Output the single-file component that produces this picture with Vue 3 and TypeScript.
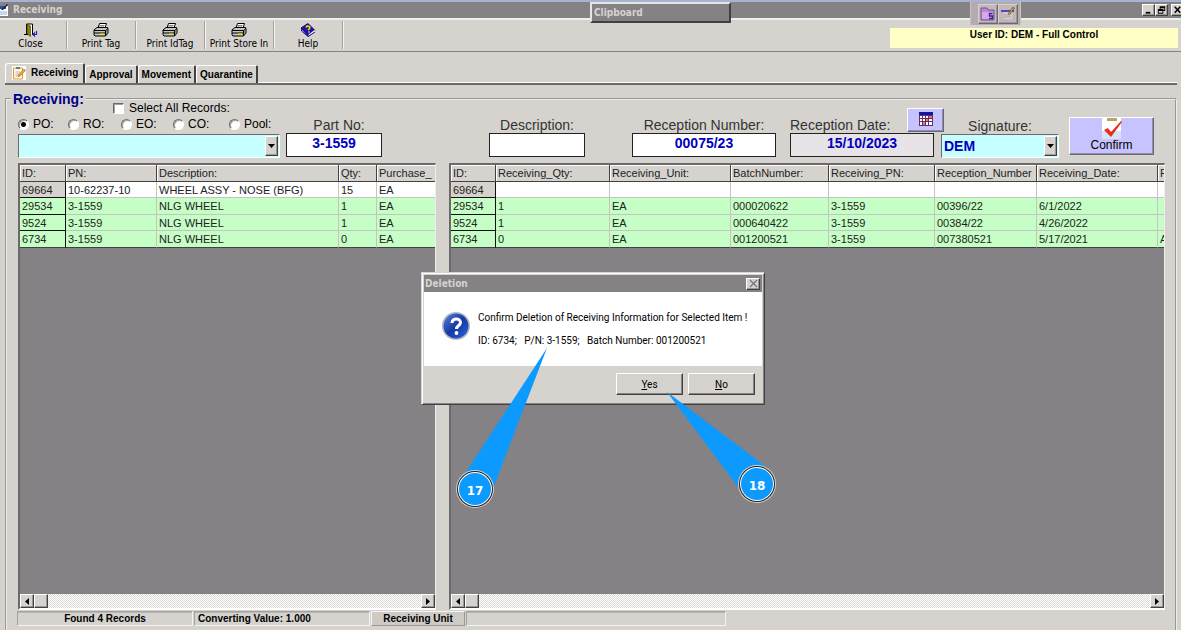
<script setup lang="ts">
import { ref } from 'vue'

type Row = string[]

const tools = [
  { label: 'Close', icon: 'door' },
  { label: 'Print Tag', icon: 'printer' },
  { label: 'Print IdTag', icon: 'printer' },
  { label: 'Print Store In', icon: 'printer' },
  { label: 'Help', icon: 'book' },
]
const tabs = ['Receiving', 'Approval', 'Movement', 'Quarantine']
const sources = ['PO:', 'RO:', 'EO:', 'CO:', 'Pool:']

const source = ref('PO:')
const selectAll = ref(false)
const order = ref('')
const partNo = ref('3-1559')
const description = ref('')
const receptionNumber = ref('00075/23')
const receptionDate = ref('15/10/2023')
const signature = ref('DEM')

const orderColumns = ['ID:', 'PN:', 'Description:', 'Qty:', 'Purchase_']
const orderRows: Row[] = [
  ['69664', '10-62237-10', 'WHEEL ASSY - NOSE (BFG)', '15', 'EA'],
  ['29534', '3-1559', 'NLG WHEEL', '1', 'EA'],
  ['9524', '3-1559', 'NLG WHEEL', '1', 'EA'],
  ['6734', '3-1559', 'NLG WHEEL', '0', 'EA'],
]

const receiptColumns = [
  'ID:', 'Receiving_Qty:', 'Receiving_Unit:', 'BatchNumber:', 'Receiving_PN:',
  'Reception_Number', 'Receiving_Date:', 'R',
]
const receiptRows: Row[] = [
  ['69664', '', '', '', '', '', '', ''],
  ['29534', '1', 'EA', '000020622', '3-1559', '00396/22', '6/1/2022', ''],
  ['9524', '1', 'EA', '000640422', '3-1559', '00384/22', '4/26/2022', ''],
  ['6734', '0', 'EA', '001200521', '3-1559', '007380521', '5/17/2021', 'A'],
]

const grids = [
  { name: 'orders', columns: orderColumns, rows: orderRows },
  { name: 'receipts', columns: receiptColumns, rows: receiptRows },
]
</script>

<template>
  <div class="window">
    <header class="titlebar">
      <svg class="app-icon" viewBox="0 0 8 12" aria-hidden="true">
        <path d="M0 2h8v10H0z" fill="#fff" />
        <path d="M0 2h6v3H0z" fill="#2a4fb0" />
        <path d="M1 6L7 0l1 1-5 5z" fill="#222" />
        <path d="M0 8h7M0 10h7" stroke="#8fb0d8" />
      </svg>
      <h1>Receiving</h1>
      <div class="window-buttons">
        <button type="button" class="bevel" aria-label="Minimize">
          <svg viewBox="0 0 12 10"><path d="M3 7h5v2H3z" /></svg>
        </button>
        <button type="button" class="bevel" aria-label="Restore">
          <svg viewBox="0 0 12 10"><path d="M4 1h6v5H8V5h1V3H5v1H4zM2 4h6v5H2zM3 6v2h4V6z" fill-rule="evenodd" /></svg>
        </button>
        <button type="button" class="bevel" aria-label="Close window">
          <svg viewBox="0 0 12 10"><path d="M3 1.500L9 8M9 1.500L3 8" stroke="#000" stroke-width="1.700" /></svg>
        </button>
      </div>
    </header>

    <nav class="toolbar" aria-label="Tools">
      <button v-for="tool in tools" :key="tool.label" type="button" class="tool">
        <svg v-if="tool.icon === 'door'" viewBox="0 0 14 14" aria-hidden="true">
          <path d="M2.500 11V1h6v10" fill="#fff" stroke="#000" />
          <path d="M3 1l3.500 2v10.500L3 11z" fill="#848200" stroke="#3a3900" stroke-width=".6" />
          <path d="M0 11.500h4M8 11.500h2" stroke="#000" />
          <path d="M12.500 8v3.500H9.500M11 9.500l-2 2 2 2" fill="none" stroke="#2222b8" stroke-width="1.200" />
        </svg>
        <svg v-else-if="tool.icon === 'printer'" viewBox="0 0 16 14" aria-hidden="true">
          <path d="M5 5l1.500-4.500h7L12 5z" fill="#fff" stroke="#000" />
          <path d="M6.500 2.500h5M6 4h5" stroke="#555" stroke-width=".7" />
          <path d="M1 7l3-2.500h10.500L15 6v4l-2.500 3H2L1 12z" fill="#c6c3c6" stroke="#000" />
          <path d="M1 7.500h11.500L15 5.500M12.500 7.500V13M1 10h11.500" fill="none" stroke="#000" />
          <path d="M7 10.500h4v1.500H7z" fill="#f4e400" />
          <path d="M14 6v5" stroke="#555" />
        </svg>
        <svg v-else viewBox="0 0 16 14" aria-hidden="true">
          <path d="M1 5l7-4.500 7 7-6.500 6z" fill="#1d12a8" stroke="#120b66" />
          <path d="M8.500 12.500l6.500-5" fill="none" stroke="#fff" stroke-width="1.500" />
          <path d="M1.500 5v3L8 13.500l7-4.500" fill="none" stroke="#1d12a8" />
          <path d="M6 4.500c1-2.500 5-1 3.500 1L8 7M8.500 8.500l1 1" fill="none" stroke="#ffe600" stroke-width="1.500" />
        </svg>
        <span>{{ tool.label }}</span>
      </button>
      <p class="user">User ID: DEM - Full Control</p>
    </nav>

    <div class="tabs" role="tablist">
      <button
        v-for="(tab, i) in tabs"
        :key="tab"
        type="button"
        role="tab"
        class="tab"
        :class="{ active: i === 0 }"
        :aria-selected="i === 0"
      >
        <svg v-if="i === 0" viewBox="0 0 14 14" aria-hidden="true">
          <path d="M0 0h14v14H0z" fill="#fff" />
          <path d="M1.500 2h9v11h-9z" fill="#fff4dc" stroke="#e09a3a" />
          <path d="M4 1h4v2H4z" fill="#777" />
          <path d="M3.500 6h4M3.500 8h3M3.500 10h4" stroke="#b9b9b9" />
          <path d="M6 10.500l.7-2.300L12 3l1.500 1.500-5.200 5.300z" fill="#f0a830" stroke="#7a5a2a" stroke-width=".5" />
        </svg>
        {{ tab }}
      </button>
    </div>

    <fieldset class="group">
      <legend>Receiving:</legend>

      <div class="form">
        <div class="search">
          <label class="all"><input v-model="selectAll" type="checkbox" />Select All Records:</label>
          <div class="sources">
            <label v-for="s in sources" :key="s">
              <input v-model="source" type="radio" name="source" :value="s" />{{ s }}
            </label>
          </div>
          <div class="combo">
            <select v-model="order" aria-label="Order"><option value=""></option></select>
            <span class="arrow bevel"><svg viewBox="0 0 7 4"><path d="M0 0h7L3.500 4z" /></svg></span>
          </div>
        </div>

        <div class="field narrow">
          <label for="part">Part No:</label>
          <input id="part" v-model="partNo" type="text" />
        </div>
        <div class="field narrow">
          <label for="desc">Description:</label>
          <input id="desc" v-model="description" type="text" />
        </div>
        <div class="field">
          <label for="number">Reception Number:</label>
          <input id="number" v-model="receptionNumber" type="text" />
        </div>
        <div class="field date">
          <div class="date-head">
            <label for="date">Reception Date:</label>
            <button type="button" class="lilac" aria-label="Pick a date">
              <svg viewBox="0 0 14 14" aria-hidden="true">
                <path d="M0 0h14v14H0z" fill="#63306c" />
                <path d="M0 0h14v3H0z" fill="#1414a4" />
                <path d="M1 4h2v2H1zM4 4h2v2H4zM7 4h2v2H7zM1 7h2v2H1zM4 7h2v2H4zM10 7h3v2h-3zM1 10h2v3H1zM7 10h2v3H7zM10 10h3v3h-3z" fill="#fff" />
                <path d="M10 4h3v2h-3zM7 7h2v2H7zM4 10h2v3H4z" fill="#f47070" />
              </svg>
            </button>
          </div>
          <input id="date" v-model="receptionDate" type="text" />
        </div>
        <div class="field sign">
          <label for="sign">Signature:</label>
          <div class="combo">
            <select id="sign" v-model="signature"><option>DEM</option></select>
            <span class="arrow bevel"><svg viewBox="0 0 7 4"><path d="M0 0h7L3.500 4z" /></svg></span>
          </div>
        </div>
        <button type="button" class="lilac confirm">
          <svg viewBox="0 0 22 21" aria-hidden="true">
            <path d="M1 0h19v21H1z" fill="#fff" />
            <path d="M1 13h19v8H1z" fill="#d5e4f8" />
            <path d="M6 0h10v3H6z" fill="#b9a468" />
            <path d="M3 12l4-2 3 4L20 3l1 1L10 19z" fill="#e8301c" />
          </svg>
          <span>Confirm</span>
        </button>
      </div>

      <div class="panes">
        <section v-for="grid in grids" :key="grid.name" class="pane" :class="grid.name">
          <div class="body">
            <table>
              <thead>
                <tr><th v-for="c in grid.columns" :key="c" scope="col">{{ c }}</th></tr>
              </thead>
              <tbody>
                <tr v-for="row in grid.rows" :key="row[0]">
                  <td v-for="(cell, i) in row" :key="i">{{ cell }}</td>
                </tr>
              </tbody>
            </table>
          </div>
          <div class="scroll">
            <button type="button" class="bevel" aria-label="Scroll left">
              <svg viewBox="0 0 4 7"><path d="M4 0v7L0 3.500z" /></svg>
            </button>
            <span class="thumb bevel"></span>
            <button type="button" class="bevel end" aria-label="Scroll right">
              <svg viewBox="0 0 4 7"><path d="M0 0v7l4-3.500z" /></svg>
            </button>
          </div>
        </section>
      </div>

      <footer class="status">
        <span class="cell found">Found 4 Records</span>
        <span class="cell value">Converting Value: 1.000</span>
        <button type="button" class="unit">Receiving Unit</button>
        <span class="cell rest"></span>
      </footer>
    </fieldset>

    <aside class="clipboard">Clipboard</aside>

    <div class="floating">
      <button type="button" class="bevel" aria-label="Shared folder">
        <svg viewBox="0 0 16 14" aria-hidden="true">
          <path d="M1 3V1h6l1 2h6v10H1z" fill="#b98ad0" stroke="#76519a" />
          <path d="M2 5h11v7H2z" fill="#d6a8e4" />
          <path d="M12.500 6.500H9.500v2.500h3v2.500h-3.500" fill="none" stroke="#3a2494" stroke-width="1.400" />
        </svg>
      </button>
      <button type="button" class="bevel" aria-label="Edit note">
        <svg viewBox="0 0 16 14" aria-hidden="true">
          <path d="M3 4h10v9H3z" fill="#d6ccd0" stroke="#b8aeb4" />
          <path d="M1 3h13v2H1z" fill="#5a45a8" />
          <path d="M8 7l5-7 1.500 1-5 7z" fill="#b6a63c" stroke="#4a4530" stroke-width=".6" />
          <path d="M4 8h5M4 10h7" stroke="#aaa0a6" />
        </svg>
      </button>
    </div>

    <div class="dialog" role="dialog" aria-labelledby="dialog-title">
      <div class="dialog-title">
        <h2 id="dialog-title">Deletion</h2>
        <button type="button" class="bevel" aria-label="Close dialog">
          <svg viewBox="0 0 9 9"><path d="M1 1l7 7M8 1L1 8" stroke="#777" stroke-width="1.300" /></svg>
        </button>
      </div>
      <div class="dialog-body">
        <svg viewBox="0 0 30 30" aria-hidden="true">
          <defs>
            <linearGradient id="ball" x1="0" y1="0" x2="1" y2="1">
              <stop offset="0" stop-color="#5b82dc" />
              <stop offset=".5" stop-color="#1539a4" />
              <stop offset="1" stop-color="#2e63e0" />
            </linearGradient>
          </defs>
          <circle cx="15" cy="15" r="14" fill="#b4b8c4" />
          <circle cx="15" cy="15" r="12.500" fill="url(#ball)" />
          <path d="M11 12c0-5.500 8.500-5 8.500-.5 0 3-4 3-4 6.500" fill="none" stroke="#fff" stroke-width="3" />
          <circle cx="15.500" cy="22" r="1.900" fill="#fff" />
        </svg>
        <div>
          <p>Confirm Deletion of Receiving Information for Selected Item !</p>
          <p>ID: 6734;&nbsp;&nbsp; P/N: 3-1559;&nbsp;&nbsp; Batch Number: 001200521</p>
        </div>
      </div>
      <div class="dialog-actions">
        <button type="button"><u>Y</u>es</button>
        <button type="button"><u>N</u>o</button>
      </div>
    </div>

    <div class="callouts">
      <svg viewBox="0 0 340 180" aria-hidden="true">
        <path d="M107 8L26 132L54 146z" fill="#0c9aff" />
        <path d="M227 52L325 126L298 147z" fill="#0c9aff" />
        <g v-for="c in [{ x: 35, y: 149 }, { x: 317, y: 144 }]" :key="c.x">
          <circle :cx="c.x" :cy="c.y" r="19" fill="#d6d3d6" />
          <circle :cx="c.x" :cy="c.y" r="18" fill="#1c1c1c" />
          <circle :cx="c.x" :cy="c.y" r="17" fill="#fff" />
          <circle :cx="c.x" :cy="c.y" r="16" fill="#0c9aff" />
        </g>
        <text x="35" y="155">17</text>
        <text x="317" y="150">18</text>
      </svg>
    </div>
  </div>
</template>

<style>
body {
  margin: 0;
  background: #fff;
}
</style>

<style scoped>
* {
  box-sizing: border-box;
}

.window {
  --face: #d6d3ce;
  --shade: #848284;
  --ui: "DejaVu Sans Condensed", "DejaVu Sans", sans-serif;
  position: relative;
  display: flex;
  flex-direction: column;
  min-height: 100vh;
  overflow: hidden;
  border-top: 2px solid #a5b4d0;
  border-bottom: 3px solid #fff;
  background: var(--face);
  color: #000;
  font-family: "Liberation Sans", Arial, sans-serif;
  font-size: 12px;
}

h1,
h2,
p {
  margin: 0;
}

button {
  padding: 0;
  border-radius: 0;
  color: #000;
  font-family: inherit;
}

.bevel {
  display: flex;
  align-items: center;
  justify-content: center;
  border: 1px solid;
  border-color: #fff #424142 #424142 #fff;
  background: var(--face);
  box-shadow: inset -1px -1px #9a9896;
}

.titlebar {
  display: flex;
  align-items: center;
  height: 16px;
  background: var(--shade);
}

.titlebar h1 {
  margin-left: 5px;
  color: var(--face);
  font: bold 10px/16px var(--ui);
}

.app-icon {
  width: 8px;
  height: 12px;
}

.window-buttons {
  display: flex;
  margin-left: auto;
  margin-right: -3px;
}

.window-buttons button {
  width: 13px;
  height: 12px;
}

.window-buttons button:last-child {
  margin-left: 3px;
}

.window-buttons svg {
  width: 11px;
  height: 10px;
}

.toolbar {
  display: flex;
  height: 34px;
  border-top: 2px solid #efeeeb;
  border-bottom: 1px solid var(--shade);
}

.tool {
  display: flex;
  flex-direction: column;
  align-items: center;
  width: 69px;
  height: 28px;
  margin-top: 1px;
  padding-top: 2px;
  border: 0;
  border-right: 1px solid #a5a3a0;
  background: none;
  box-shadow: 1px 0 #f4f3f1;
  font: 10px/14px var(--ui);
  white-space: nowrap;
}

.tool:first-child {
  width: 67px;
  padding-right: 5px;
}

.tool svg {
  width: 16px;
  height: 14px;
  flex: none;
}

.user {
  width: 288px;
  height: 20px;
  margin: 8px 3px 0 auto;
  background: #ffffc6;
  font-size: 10px;
  font-weight: bold;
  line-height: 13px;
  text-align: center;
}

.tabs {
  display: flex;
  align-items: flex-end;
  margin: 11px 4px 0 5px;
  border-bottom: 2px solid #6b696b;
  box-shadow: inset 0 -1px #fff;
}

.tab {
  height: 18px;
  padding: 0 3px;
  border: solid;
  border-width: 1px 2px 0 1px;
  border-color: #fff #424142 #fff #fff;
  border-radius: 3px 2px 0 0;
  background: var(--face);
  font-size: 10px;
  font-weight: bold;
  line-height: 17px;
}

.tab.active {
  display: flex;
  align-items: center;
  gap: 5px;
  height: 20px;
  padding: 0 5px 2px 6px;
}

.tab svg {
  width: 14px;
  height: 14px;
}

.group {
  min-width: 0;
  flex: 1;
  margin: 6px 4px 0 5px;
  padding: 0 10px 3px 11px;
  border: 2px groove #eeece8;
  border-bottom: 0;
}

.group legend {
  height: 16px;
  margin-left: -7px;
  padding: 0 2px;
  color: #000084;
  font-size: 14px;
  font-weight: bold;
  line-height: 16px;
}

.form {
  display: grid;
  grid-template-columns: 268fr 203fr 143fr 158fr 151fr 128fr 96fr;
  align-items: end;
  height: 56px;
  margin-top: -5px;
}

.search {
  display: flex;
  flex-direction: column;
  width: 262px;
}

.all {
  display: flex;
  align-items: center;
  gap: 5px;
  height: 12px;
  margin-left: 95px;
}

input[type="checkbox"],
input[type="radio"] {
  appearance: none;
  flex: none;
  width: 11px;
  height: 11px;
  margin: 0;
  border: 1px solid;
  border-color: #6b696b #fff #fff #6b696b;
  background: #fff;
  box-shadow: inset 1px 1px #a5a3a0;
}

input[type="radio"] {
  border-radius: 50%;
}

input[type="radio"]:checked {
  background: radial-gradient(circle, #000 2px, #fff 3px);
}

.sources {
  display: grid;
  grid-template-columns: 50px 53px 52px 56px 50px;
  height: 20px;
}

.sources label {
  display: flex;
  align-items: center;
  gap: 4px;
}

.combo {
  display: flex;
  height: 24px;
  padding: 1px;
  border: 1px solid;
  border-color: #6b696b #fff #fff #6b696b;
  background: #c6ffff;
}

.combo select {
  appearance: none;
  flex: 1;
  min-width: 0;
  padding: 0 1px;
  border: 0;
  border-radius: 0;
  background: none;
  color: #0000c0;
  font: bold 14px "Liberation Sans", Arial, sans-serif;
}

.combo .arrow {
  width: 13px;
}

.combo .arrow svg {
  width: 7px;
  height: 4px;
}

.field {
  display: flex;
  flex-direction: column;
  width: 144px;
  padding-bottom: 1px;
  font-size: 14px;
  line-height: 15px;
}

.field.narrow {
  width: 96px;
}

.field label {
  color: #333;
  text-align: center;
  white-space: nowrap;
}

.field.narrow label {
  padding-left: 10px;
}

.field.narrow + .narrow label {
  padding-left: 0;
}

.field input {
  width: 100%;
  height: 24px;
  padding: 0 0 4px;
  border: 1px solid #222;
  border-radius: 0;
  background: #fff;
  color: #0000c0;
  font: bold 14px "Liberation Sans", Arial, sans-serif;
  text-align: center;
}

.field.date input {
  background: #e7e3e7;
}

.date-head {
  display: flex;
  align-items: flex-end;
  justify-content: space-between;
  width: 154px;
}

.date-head .lilac {
  width: 37px;
  height: 24px;
  margin-bottom: 1px;
}

.date-head svg {
  width: 14px;
  height: 14px;
}

.field.sign {
  width: 118px;
  padding-bottom: 0;
}

.lilac {
  border: 1px solid;
  border-color: #fff #6b696b #6b696b #fff;
  background: #c6c3ff;
  box-shadow: inset -1px -1px #8e8bb4;
}

.confirm {
  display: flex;
  flex-direction: column;
  align-items: center;
  width: 85px;
  height: 38px;
  margin-bottom: 3px;
  font-size: 12px;
  line-height: 12px;
}

.confirm svg {
  width: 22px;
  height: 21px;
}

.panes {
  display: grid;
  grid-template-columns: minmax(0, 418fr) minmax(0, 716fr);
  gap: 13px;
  min-height: calc(100vh - 186px);
  margin-top: 5px;
}

.pane {
  display: flex;
  flex-direction: column;
  border: 2px solid;
  border-color: #6b696b #efeeeb #fff #6b696b;
  border-right-width: 1px;
}

.body {
  flex: 1;
  overflow: hidden;
  background: var(--shade);
}

table {
  width: 100%;
  border-spacing: 0;
  table-layout: fixed;
}

th,
td {
  height: 17px;
  padding: 0 2px;
  overflow: hidden;
  border: solid #c6c3c6;
  border-width: 0 1px 1px 0;
  background: #c6ffc6;
  color: #222;
  font-size: 11px;
  font-weight: normal;
  line-height: 14px;
  text-align: left;
  white-space: nowrap;
}

tbody tr:nth-child(odd) td {
  height: 16px;
}

th {
  border-color: #424142;
  background: var(--face);
  box-shadow: inset 1px 1px #fff;
}

tbody tr:first-child td {
  background: #fff;
}

tbody tr td:first-child {
  border-color: #111;
}

tbody tr:first-child td:first-child {
  background: var(--face);
}

th:last-child,
td:last-child {
  border-right: 0;
}

tbody tr:last-child td {
  border-bottom-color: #424142;
}

.orders th:nth-child(1) { width: 46px; }
.orders th:nth-child(2) { width: 91px; }
.orders th:nth-child(3) { width: 182px; }
.orders th:nth-child(4) { width: 38px; }

.receipts th:nth-child(1) { width: 45px; }
.receipts th:nth-child(2) { width: 114px; }
.receipts th:nth-child(3) { width: 121px; }
.receipts th:nth-child(4) { width: 98px; }
.receipts th:nth-child(5) { width: 106px; }
.receipts th:nth-child(6) { width: 102px; }
.receipts th:nth-child(7) { width: 121px; }

.scroll {
  display: flex;
  height: 14px;
  background: repeating-conic-gradient(#fff 0 25%, #dddad6 0 50%) 0 0 / 2px 2px;
}

.scroll .bevel {
  width: 14px;
  height: 14px;
}

.scroll .end {
  margin-left: auto;
}

.scroll svg {
  width: 4px;
  height: 7px;
}

.status {
  display: flex;
  height: 15px;
  margin: 1px 0 0 -1px;
  font-size: 10px;
  font-weight: bold;
  line-height: 13px;
}

.cell {
  margin-right: 1px;
  border: 1px solid;
  border-color: #a5a3a0 #f4f3f1 #f4f3f1 #a5a3a0;
  box-shadow: inset 0 1px #b8b5b2;
}

.found {
  width: 176px;
  text-align: center;
}

.value {
  width: 176px;
  padding-left: 3px;
}

.unit {
  width: 94px;
  margin-right: 1px;
  border: 1px solid;
  border-color: #f4f3f1 #9a9896 #9a9896 #f4f3f1;
  background: #cecbc6;
  font-size: 10px;
  font-weight: bold;
}

.rest {
  width: 260px;
}

.clipboard {
  position: absolute;
  top: 0;
  left: 590px;
  width: 141px;
  height: 21px;
  padding-left: 2px;
  border: 2px solid;
  border-color: #e7e5e2 #424142 #424142 #e7e5e2;
  background: var(--shade);
  color: var(--face);
  font: bold 10px/17px var(--ui);
}

.floating {
  position: absolute;
  top: 0;
  right: 160px;
  display: flex;
  width: 51px;
  height: 23px;
  padding: 2px 0 0 7px;
  border: solid #c8c2c2;
  border-width: 0 1px;
  background: #b5aaad;
}

.floating .bevel {
  width: 20px;
  height: 20px;
  border-color: #d8d0d2 #6b696b #6b696b #d8d0d2;
  background: #c2b8bb;
}

.floating svg {
  width: 16px;
  height: 14px;
}

.dialog {
  position: absolute;
  top: 270px;
  left: 421px;
  width: 344px;
  border: 1px solid;
  border-color: var(--face) #424142 #424142 var(--face);
  padding: 2px;
  background: var(--face);
  box-shadow: inset 1px 1px #fff, inset -1px -1px #848284;
  font-family: Roboto, sans-serif;
  font-size: 10px;
}

.dialog-title {
  display: flex;
  align-items: center;
  justify-content: space-between;
  height: 17px;
  padding: 0 2px 0 1px;
  background: var(--shade);
}

.dialog-title h2 {
  color: var(--face);
  font: bold 10px/16px var(--ui);
}

.dialog-title .bevel {
  width: 14px;
  height: 12px;
}

.dialog-title svg {
  width: 9px;
  height: 9px;
}

.dialog-body {
  display: flex;
  gap: 7px;
  height: 74px;
  padding: 19px 0 0 17px;
  background: #fff;
}

.dialog-body svg {
  flex: none;
  width: 30px;
  height: 30px;
}

.dialog-body p {
  line-height: 14px;
  white-space: nowrap;
}

.dialog-body p + p {
  margin-top: 9px;
}

.dialog-actions {
  display: flex;
  justify-content: flex-end;
  gap: 5px;
  padding: 7px;
}

.dialog-actions button {
  width: 67px;
  height: 22px;
  border: 1px solid;
  border-color: #fff #424142 #424142 #fff;
  background: var(--face);
  box-shadow: inset -1px -1px #848284;
  font-size: 10px;
}

.callouts {
  position: absolute;
  top: 338px;
  left: 440px;
  width: 340px;
  height: 180px;
  pointer-events: none;
}

.callouts text {
  fill: #fff;
  font: bold 12px "DejaVu Sans", sans-serif;
  text-anchor: middle;
}
</style>
